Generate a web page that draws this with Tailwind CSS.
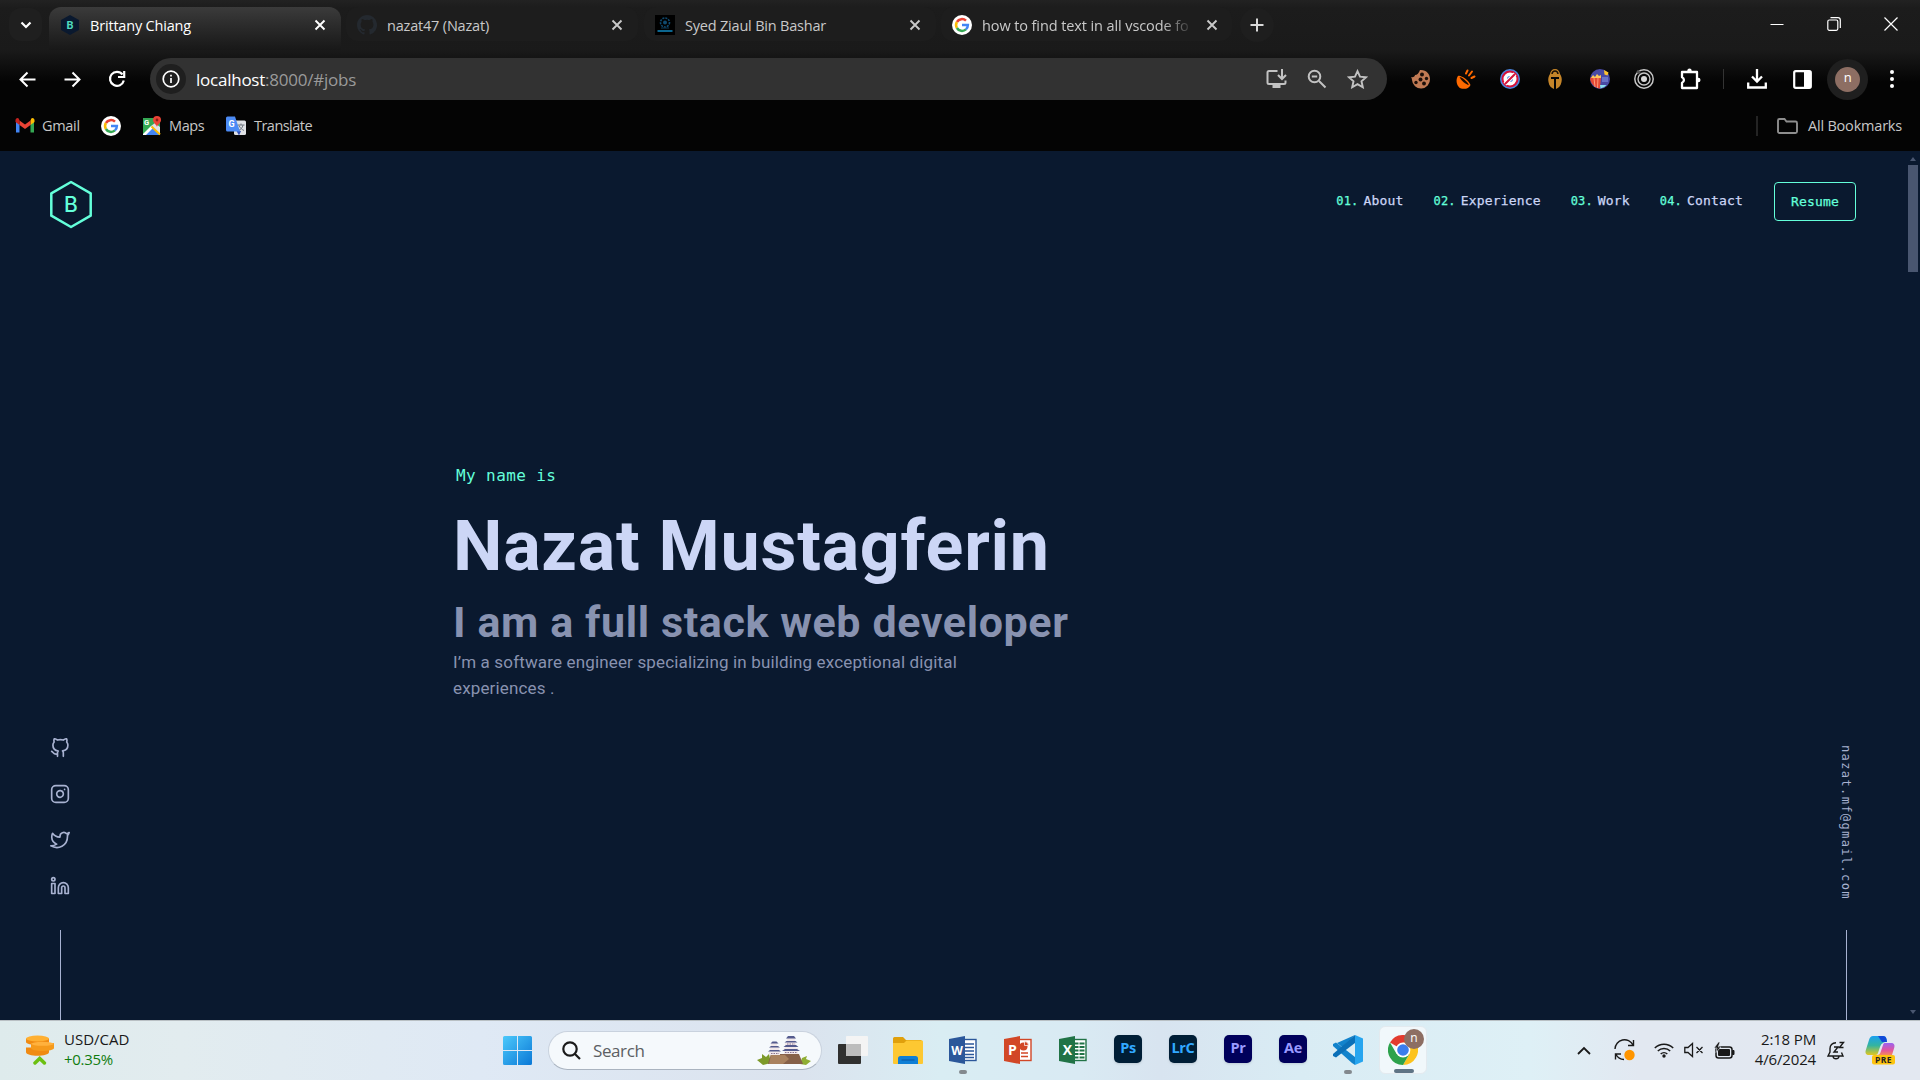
<!DOCTYPE html>
<html lang="en">
<head>
<meta charset="utf-8">
<title>Brittany Chiang</title>
<script src="https://cdn.jsdelivr.net/npm/@tailwindcss/browser@4"></script>
</head>
<body class="w-[1920px] h-[1080px] overflow-hidden bg-black font-['Open_Sans',sans-serif]">
<svg class="hidden">
  <defs>
    <symbol id="g-logo" viewBox="0 0 20 20">
      <circle cx="10" cy="10" r="10" fill="#fff"/>
      <path d="M4.9 7A5.9 5.9 0 0 1 14 5.700" fill="none" stroke="#ea4335" stroke-width="2.500"/>
      <path d="M4.900 13A5.900 5.900 0 0 1 4.900 7" fill="none" stroke="#fbbc05" stroke-width="2.500"/>
      <path d="M13.900 14.400A5.900 5.900 0 0 1 4.900 13" fill="none" stroke="#34a853" stroke-width="2.500"/>
      <path d="M10 10H15.900A5.900 5.900 0 0 1 13.900 14.400" fill="none" stroke="#4285f4" stroke-width="2.500"/>
    </symbol>
    <symbol id="x" viewBox="0 0 12 12"><path d="M1.500 1.500l9 9M10.500 1.500l-9 9" stroke="currentColor" stroke-width="1.900"/></symbol>
  </defs>
</svg>

<!-- Browser frame -->
<header class="h-[151px] bg-[linear-gradient(#222_0,#1c1c1c_8px,#1a1a1a_50px,#040404_82px,#040404_100%)] text-[14.5px]">
  <div class="flex h-[50px] items-start">
    <div class="w-[49px] pl-[9px] pt-2">
      <div class="flex size-[33px] items-center justify-center rounded-xl bg-[#1f1f1f]">
        <svg width="12" height="8" viewBox="0 0 12 8"><path d="M1.500 1.500L6 6l4.500-4.500" fill="none" stroke="#fff" stroke-width="2.200"/></svg>
      </div>
    </div>
    <div class="mr-[5px] mt-[7px] flex h-[43px] w-[292px] items-start rounded-t-xl bg-linear-to-b from-[#3b3b3b] to-[#181818] pl-[11px] pt-2 text-white">
      <svg class="mr-2.5" width="20" height="20" viewBox="0 0 20 20"><path d="M10 0l9 5v10l-9 5-9-5V5z" fill="#0a192f"/><text x="10" y="14" font-size="11" font-weight="700" text-anchor="middle" fill="#4fd9bd" font-family="Roboto">B</text></svg>
      <span class="w-[224px] leading-[22px] tracking-[-0.185px]">Brittany Chiang</span>
      <svg class="mt-1" width="12" height="12"><use href="#x"/></svg>
    </div>
    <div class="mr-1.5 mt-[7px] flex h-[34px] w-[292px] items-start rounded-xl bg-[#1d1d1d] pl-[11px] pt-2 text-[#c9c9c9]">
      <svg class="mr-2.5" width="20" height="20" viewBox="0 0 16 16"><path fill="#24292f" d="M8 0C3.580 0 0 3.580 0 8c0 3.540 2.290 6.530 5.470 7.590.4.070.55-.17.55-.38 0-.19-.01-.82-.01-1.490-2.010.37-2.530-.49-2.690-.94-.09-.23-.48-.94-.82-1.130-.28-.15-.68-.52-.01-.53.630-.01 1.080.58 1.230.82.720 1.210 1.870.87 2.330.66.070-.52.280-.87.510-1.070-1.780-.2-3.640-.89-3.640-3.950 0-.87.310-1.590.82-2.150-.08-.2-.36-1.020.08-2.120 0 0 .67-.21 2.200.82a7.600 7.600 0 0 1 4 0c1.530-1.040 2.200-.82 2.200-.82.440 1.100.16 1.920.08 2.120.51.560.82 1.270.82 2.150 0 3.070-1.870 3.750-3.650 3.950.29.250.54.730.54 1.480 0 1.070-.01 1.930-.01 2.200 0 .21.150.46.550.38A8 8 0 0 0 8 0z"/></svg>
      <span class="w-[224px] leading-[22px] tracking-[-0.19px]">nazat47 (Nazat)</span>
      <svg class="mt-1" width="12" height="12"><use href="#x"/></svg>
    </div>
    <div class="mr-[5px] mt-[7px] flex h-[34px] w-[292px] items-start rounded-xl bg-[#1d1d1d] pl-[11px] pt-2 text-[#c9c9c9]">
      <svg class="mr-2.5" width="20" height="20" viewBox="0 0 20 20"><path fill="#000" d="M0 0h20v20H0z"/><circle cx="10" cy="7.500" r="4.500" fill="none" stroke="#0f4a70" stroke-width="1.600" stroke-dasharray="2 1"/><circle cx="10" cy="7.500" r="2" fill="#0f4a70"/><path d="M6 13h8" stroke="#0d3a58"/><path d="M2.500 16h15" stroke="#1081b4" stroke-width="1.600"/></svg>
      <span class="w-[224px] leading-[22px] tracking-[-0.2px]">Syed Ziaul Bin Bashar</span>
      <svg class="mt-1" width="12" height="12"><use href="#x"/></svg>
    </div>
    <div class="mt-[7px] flex h-[34px] w-[291px] items-start rounded-xl bg-[#1d1d1d] pl-[11px] pt-2 text-[#c9c9c9]">
      <svg class="mr-2.5" width="20" height="20"><use href="#g-logo"/></svg>
      <span class="mr-[15px] w-[209px] whitespace-nowrap leading-[22px] tracking-[-0.1px] [mask-image:linear-gradient(to_right,#000_180px,transparent_212px)]">how to find text in all vscode fo</span>
      <svg class="mt-1" width="12" height="12"><use href="#x"/></svg>
    </div>
    <div class="ml-2 mt-2 flex size-[34px] items-center justify-center rounded-full bg-[#1e1e1e]">
      <svg width="14" height="14" viewBox="0 0 14 14"><path d="M7 .5v13M.5 7h13" stroke="#d8d8d8" stroke-width="2"/></svg>
    </div>
    <div class="ml-auto mr-[22px] mt-[17px] flex items-center gap-[43px]">
      <svg width="14" height="14"><path d="M.5 7.500h13" stroke="#fff"/></svg>
      <svg width="14" height="14" viewBox="0 0 14 14" fill="none" stroke="#fff" stroke-width="1.200"><rect x=".8" y="3" width="10" height="10.300" rx="1.500"/><path d="M3.500.7H11a2.300 2.300 0 0 1 2.300 2.300v8"/></svg>
      <svg width="14" height="14"><path d="M.5.5l13 13M13.500.5l-13 13" stroke="#fff" stroke-width="1.200"/></svg>
    </div>
  </div>

  <div class="flex h-[50px] items-center pt-2">
    <svg class="ml-[19px]" width="17" height="17" viewBox="0 0 17 17" fill="none" stroke="#fff" stroke-width="2"><path d="M16.500 8.500H2M8.500 1.500l-7 7 7 7"/></svg>
    <svg class="ml-7" width="17" height="17" viewBox="0 0 17 17" fill="none" stroke="#fff" stroke-width="2"><path d="M.5 8.500H15M8.500 1.500l7 7-7 7"/></svg>
    <svg class="ml-[27px]" width="18" height="18" viewBox="0 0 18 18" fill="none" stroke="#fff" stroke-width="2.200"><path d="M15.800 10.500A7 7 0 1 1 14.500 4.500"/><path d="M16.200 1v6H10"/></svg>
    <div class="ml-6 flex h-[42px] w-[1237px] items-center rounded-full bg-[#323232] pl-1.5">
      <div class="flex size-[30px] items-center justify-center rounded-full bg-[#1f1f1f]">
        <svg width="18" height="18" viewBox="0 0 18 18" fill="none" stroke="#fff" stroke-width="1.700"><circle cx="9" cy="9" r="7.800"/><path d="M9 8v5M9 4.800v1.800"/></svg>
      </div>
      <span class="ml-2.5 pt-px text-[17px] tracking-[-0.24px] text-[#9a9a9a]"><span class="text-white">localhost</span>:8000/#jobs</span>
      <div class="ml-auto mr-[19px] flex items-center gap-5 text-[#c2c2c2]">
        <svg width="21" height="20" viewBox="0 0 21 20" fill="none" stroke="currentColor" stroke-width="2"><path d="M11.500 2H3a1.500 1.500 0 0 0-1.500 1.500v10A1.500 1.500 0 0 0 3 15h15a1.500 1.500 0 0 0 1.500-1.500V11.500"/><path d="M6.500 17.500h8" stroke-width="3"/><path d="M16 0v9.500M12 6l4 4 4-4"/></svg>
        <svg width="20" height="20" viewBox="0 0 20 20" fill="none" stroke="currentColor" stroke-width="2"><circle cx="7.500" cy="7.500" r="5.800"/><path d="M12 12l6.500 6.500M4.800 7.500h5.400"/></svg>
        <svg width="21" height="20" viewBox="0 0 21 20" fill="none" stroke="currentColor" stroke-width="1.900"><path d="M10.500 2.200l2.500 5.500 6 .6-4.500 4 1.300 5.900-5.300-3.100-5.300 3.100 1.300-5.900-4.500-4 6-.6z"/></svg>
      </div>
    </div>
    <div class="ml-6 flex items-center gap-[24.700px]">
      <svg width="20" height="20" viewBox="0 0 20 20"><path d="M9 1a3 3 0 0 0 1 0c5.500 0 9 4 9 9a9 9 0 0 1-18 1c0-1-.3-2-1-3 2 1 4-.5 4-2 2 0 4-2 5-5z" fill="#c07a54"/><g fill="#1c0f0a"><circle cx="11" cy="5.500" r="2"/><circle cx="15.500" cy="9.500" r="1.700"/><circle cx="9.500" cy="10.500" r="2"/><circle cx="5" cy="13.500" r="1.700"/><circle cx="13" cy="14.500" r="1.900"/></g></svg>
      <svg width="20" height="20" viewBox="0 0 20 20"><path d="M2 7c2.500-1.500 11 4.500 12.500 9C13 19.500 9 20.500 5 19.500 1 18-1 11 2 7z" fill="#ff6a00"/><path d="M3.500 8C6 8 12 13 12.800 16 10 15.500 5 11.500 3.500 8z" fill="#1a0c02"/><g stroke="#ff6a00" stroke-width="2" stroke-linecap="round"><path d="M10 4.500l1.500-3M13 6.500l3-4M15.500 9l3-1.500"/></g></svg>
      <svg width="20" height="20" viewBox="0 0 20 20"><circle cx="10" cy="10" r="10" fill="#4a86e0"/><circle cx="10" cy="10" r="7.500" fill="#fff" stroke="#d5123a" stroke-width="2"/><circle cx="10" cy="10" r="3" fill="#4a86e0"/><path d="M5 15L15 5" stroke="#fff" stroke-width="4"/><path d="M5 15L15 5" stroke="#d5123a" stroke-width="2"/></svg>
      <svg width="20" height="20" viewBox="0 0 20 20"><path d="M10 0c3 0 4.500 2 5 5 1.500 2 2.300 5 1.500 8-.8 4-3 6-5.500 7V10h3V8H6v2h3v10c-2.500-1-5-3-5.500-7-.7-3 0-6 1.500-8 .5-3 2-5 5-5z" fill="#c58529"/><path d="M7 5c.3-2 1.300-3 3-3s2.700 1 3 3" fill="none" stroke="#1c1206" stroke-width="1.500"/></svg>
      <svg width="20" height="20" viewBox="0 0 20 20"><circle cx="10" cy="10" r="10" fill="#494aa5"/><path d="M12 8h6v5h-6z" fill="#6a74c8"/><path d="M14 1l4.500 2.500-1 3-3-1z" fill="#ffc42e"/><path d="M1 8h10l-1 11.500C5 19 1 15 0 10z" fill="#e64a35"/><path d="M1 9l2-3 2 2 2-3 2 2 2-1v3H1z" fill="#ffc65b"/><path d="M4 9l1 9M8 9l-.5 10" stroke="#ff9a7a"/><path d="M10 16h6.500a9 9 0 0 1-6 3.500z" fill="#8ce0ee"/></svg>
      <svg width="20" height="20" viewBox="0 0 20 20" fill="none" stroke="#c6c6c6"><circle cx="10" cy="10" r="9.200" stroke-width="1.500"/><circle cx="10" cy="10" r="6" stroke-width="1.400"/><circle cx="10" cy="10" r="3" fill="#d8d8d8" stroke="none"/><path d="M3 2l3 2" stroke="#555" stroke-width="3"/></svg>
      <svg width="22" height="22" viewBox="0 0 22 22"><path d="M3 4H18V20H3v-5.200a3 3 0 0 0 0-5.600z" fill="none" stroke="#fff" stroke-width="2.300" stroke-linejoin="round"/><circle cx="10.500" cy="2.800" r="2.200" fill="#fff"/><circle cx="19.300" cy="12" r="2.200" fill="#fff"/></svg>
    </div>
    <div class="ml-[22px] h-5 w-px bg-[#333]"></div>
    <svg class="ml-[23px]" width="20" height="20" viewBox="0 0 20 20" fill="none" stroke="#fff" stroke-width="2.300"><path d="M10 0v12M5 7.500l5 5 5-5M1.200 13.500v5h17.600v-5"/></svg>
    <svg class="ml-[26px]" width="19" height="19" viewBox="0 0 19 19"><rect x="1.200" y="1.200" width="16.600" height="16.600" rx="1.500" fill="none" stroke="#fff" stroke-width="2.200"/><path d="M11 1h7v17h-7z" fill="#fff"/></svg>
    <div class="ml-[15px] flex size-[41px] items-center justify-center rounded-full bg-[#1f1f1f]"><div class="flex size-[25px] items-center justify-center rounded-full bg-[#8d6e63] pb-0.5 text-[13px] text-white">n</div></div>
    <svg class="ml-[22px]" width="4" height="18" viewBox="0 0 4 18" fill="#fff"><circle cx="2" cy="2" r="2"/><circle cx="2" cy="9" r="2"/><circle cx="2" cy="16" r="2"/></svg>
  </div>

  <div class="flex h-[51px] items-center pl-[15px] pr-[18px] text-[#c7c7c7]">
    <svg width="20" height="15" viewBox="0 0 20 15"><path d="M1 2v12.500h3.500V6z" fill="#4285f4"/><path d="M19 2v12.500h-3.500V6z" fill="#34a853"/><path d="M15.500 2.500V7L19.500 4V2a2 2 0 0 0-3.200-1.500z" fill="#fbbc04"/><path d="M4.500 7V2.500L10 6.500l5.500-4V7L10 11z" fill="#ea4335"/><path d="M.5 2v2l4 3V2.500L3.700.5A2 2 0 0 0 .5 2z" fill="#c5221f"/></svg>
    <span class="ml-[7px] w-[59px] tracking-[-0.3px]">Gmail</span>
    <svg class="mr-[21px]" width="20" height="20"><use href="#g-logo"/></svg>
    <svg width="20" height="20" viewBox="0 0 20 20"><path d="M1 2h17v17H1z" fill="#34a853"/><path d="M9 11l9 8H3z" fill="#4285f4"/><path d="M9 10L1 18v1h3l8-8z" fill="#fff"/><path d="M9 10l4-3 5 4v8z" fill="#dfe3e8"/><path d="M9.500 10.500l8.500 8" stroke="#fbbc04" stroke-width="2"/><text x="2" y="9" font-size="7.500" font-weight="700" fill="#fff" font-family="Roboto">G</text><path d="M15 11c-.5-2.500-4-4-4-7a4 4 0 0 1 8 0c0 3-3.500 4.500-4 7z" fill="#ea4335"/><circle cx="15" cy="4" r="1.400" fill="#8c2018"/></svg>
    <span class="ml-[7px] w-[57px] tracking-[-0.4px]">Maps</span>
    <svg width="20" height="20" viewBox="0 0 20 20"><rect x="8" y="4.500" width="12" height="14.500" rx="1.500" fill="#dfe1e5"/><path d="M10 14l3 5.500L15 15z" fill="#3350b5"/><path d="M11.500 9h7M15 7.500V9M17 9c-.5 3-2.500 4.500-4.500 5.500M13 9.500c1 2.500 3 4 5 5" stroke="#6f7780" fill="none"/><path d="M1.500.5H9l5 15H1.500A1.500 1.500 0 0 1 0 14V2A1.500 1.500 0 0 1 1.500.5z" fill="#4c8bf5"/><text x="2.500" y="11" font-size="9" font-weight="700" fill="#fff" font-family="Roboto">G</text></svg>
    <span class="ml-2 tracking-[-0.53px]">Translate</span>
    <div class="ml-auto h-5 w-0.5 bg-[#242424]"></div>
    <svg class="ml-[19px]" width="21" height="16" viewBox="0 0 21 16"><path d="M1 13.500v-11A1.500 1.500 0 0 1 2.500 1h5l2 2.500h9A1.500 1.500 0 0 1 20 5v8.500a1.500 1.500 0 0 1-1.500 1.500h-16A1.500 1.500 0 0 1 1 13.500z" fill="none" stroke="#8e8e8e" stroke-width="1.900"/></svg>
    <span class="ml-[10px] tracking-[-0.2px]">All Bookmarks</span>
  </div>
</header>

<!-- Portfolio page -->
<main class="relative flex h-[869px] bg-[#0a192f] font-['Roboto',sans-serif] text-[#a8b2d1]">
  <aside class="flex w-[121px] flex-col justify-between">
    <svg class="ml-[49px] mt-[28px]" width="44" height="50" viewBox="0 0 44 50"><path d="M22 3l19.700 11.300v22.400L22 48 2.300 36.700V14.300z" fill="none" stroke="#64ffda" stroke-width="2.500" stroke-linejoin="round"/><text x="22" y="33" font-size="21" text-anchor="middle" fill="#64ffda" font-family="Inter" font-weight="500">B</text></svg>
    <div class="flex w-[120px] flex-col items-center gap-[26px] [&_svg]:size-5 [&_svg]:fill-none [&_svg]:stroke-current [&_svg]:stroke-2 [&_svg]:[stroke-linecap:round] [&_svg]:[stroke-linejoin:round]">
      <svg viewBox="0 0 24 24"><path d="M9 19c-5 1.500-5-2.500-7-3m14 6v-3.870a3.370 3.370 0 0 0-.94-2.610c3.140-.35 6.440-1.540 6.440-7A5.440 5.440 0 0 0 20 4.770 5.070 5.070 0 0 0 19.910 1S18.730.650 16 2.480a13.380 13.380 0 0 0-7 0C6.270.650 5.090 1 5.090 1A5.070 5.070 0 0 0 5 4.770a5.440 5.440 0 0 0-1.500 3.780c0 5.420 3.300 6.610 6.440 7A3.370 3.370 0 0 0 9 18.130V22"/></svg>
      <svg viewBox="0 0 24 24"><rect x="2" y="2" width="20" height="20" rx="5"/><path d="M16 11.370A4 4 0 1 1 12.630 8 4 4 0 0 1 16 11.370zM17.500 6.500h.01"/></svg>
      <svg viewBox="0 0 24 24"><path d="M23 3a10.900 10.900 0 0 1-3.140 1.530 4.480 4.480 0 0 0-7.860 3v1A10.660 10.660 0 0 1 3 4s-4 9 5 13a11.640 11.640 0 0 1-7 2c9 5 20 0 20-11.500a4.500 4.500 0 0 0-.08-.83A7.720 7.720 0 0 0 23 3z"/></svg>
      <svg viewBox="0 0 24 24"><path d="M16 8a6 6 0 0 1 6 6v7h-4v-7a2 2 0 0 0-4 0v7h-4v-7a6 6 0 0 1 6-6z"/><rect x="2" y="9" width="4" height="12"/><circle cx="4" cy="4" r="2"/></svg>
      <div class="ml-px mt-[8px] h-[90px] w-px bg-[#a8b2d1]"></div>
    </div>
  </aside>

  <section class="ml-[332px] w-[760px] pt-[313px]">
    <p class="h-[44px] pl-[3px] font-['DejaVu_Sans_Mono',monospace] text-[16px] leading-6 tracking-[0.4px] text-[#64ffda]">My name is</p>
    <h1 class="text-[70px] font-bold leading-[76px] tracking-[0.75px] text-[#ccd6f6]">Nazat Mustagferin</h1>
    <h2 class="mt-3 text-[43px] font-bold leading-[52px] tracking-[0.6px] text-[#8892b0]">I am a full stack web developer</h2>
    <p class="w-[540px] pt-px text-[17px] leading-[26px] tracking-[0.153px] text-[#8892b0]">I’m a software engineer specializing in building exceptional digital experiences .</p>
  </section>

  <aside class="absolute right-0 top-0 flex h-full flex-col items-end justify-between pr-[64px] font-['DejaVu_Sans_Mono',monospace] text-[13px]">
    <nav class="flex items-start pt-[31px] tracking-[0.17px] text-[#ccd6f6] [-webkit-text-stroke:0.25px_currentColor]">
      <a class="mr-[30px] mt-[9px]"><span class="mr-[5px] text-xs text-[#64ffda]">01.</span>About</a>
      <a class="mr-[30px] mt-[9px]"><span class="mr-[5px] text-xs text-[#64ffda]">02.</span>Experience</a>
      <a class="mr-[30px] mt-[9px]"><span class="mr-[5px] text-xs text-[#64ffda]">03.</span>Work</a>
      <a class="mr-[31px] mt-[9px]"><span class="mr-[5px] text-xs text-[#64ffda]">04.</span>Contact</a>
      <a class="flex h-[39px] w-[82px] items-center justify-center rounded-[4px] border border-[#64ffda] text-[#64ffda]">Resume</a>
    </nav>
    <div class="mr-px flex w-[20px] flex-col items-center">
      <span class="ml-px h-[185px] text-[12px] leading-5 tracking-[1.38px] [writing-mode:vertical-rl]">nazat.mf@gmail.com</span>
      <div class="ml-[3px] h-[90px] w-px bg-[#a8b2d1]"></div>
    </div>
  </aside>

  <div class="absolute right-0 top-0 flex h-full w-[14px] flex-col items-center pt-1.5">
    <svg width="6" height="4"><path d="M0 4l3-4 3 4z" fill="#495670"/></svg>
    <div class="mt-1 h-[107px] w-2.5 bg-[#495670]"></div>
    <svg class="mb-1.5 mt-auto" width="6" height="4"><path d="M0 0l3 4 3-4z" fill="#495670"/></svg>
  </div>
</main>

<!-- Taskbar -->
<footer class="flex h-[60px] items-center border-t border-[#b9c0c4] bg-[linear-gradient(to_right,#deebec_0,#e2ecef_180px,#dfe9f5_480px,#dbe3ee_800px,#d9edf3_940px,#d9eaf3_1080px,#d8e4f0_1160px,#d9ecf4_1300px,#def0f6_1530px,#e2e8f1_1640px,#e3e8f1_100%)] pb-px text-[15px] text-[#191919]">
  <svg class="ml-[25px]" width="30" height="30" viewBox="0 0 30 30"><g fill="#f08a12"><path d="M1 12.500h23V17c0 5-23 5-23 0z"/><path d="M6 8h23v5c0 4-23 4-23 0z" fill="#f59a1c"/><path d="M1 3.500h23V7c0 4-23 4-23 0z"/></g><ellipse cx="17.500" cy="8.800" rx="11.500" ry="2" fill="#ffb13d"/><ellipse cx="12.500" cy="3.500" rx="11.500" ry="3" fill="#ffb032"/><path d="M10 28l4.700-4.500 4.700 4.500" fill="none" stroke="#6bc011" stroke-width="3.500" stroke-linecap="round"/></svg>
  <div class="ml-[9px] w-[439px] pb-[3px] text-[15px] leading-5"><div>USD/CAD</div><div class="tracking-[-0.3px] text-[#107c10]">+0.35%</div></div>

  <svg width="29" height="29" viewBox="0 0 29 29"><defs><linearGradient id="w" x1="0" y1="0" x2="1" y2="1" gradientUnits="objectBoundingBox"><stop stop-color="#4cc9fb"/><stop offset="1" stop-color="#0b78d6"/></linearGradient></defs><path fill="url(#w)" d="M1.500 0H14v14H0V1.500A1.500 1.500 0 0 1 1.500 0zM15 0h12.500A1.500 1.500 0 0 1 29 1.500V14H15zM0 15h14v14H1.500A1.500 1.500 0 0 1 0 27.500zM15 15h14v12.500a1.500 1.500 0 0 1-1.500 1.500H15z"/></svg>
  <div class="ml-4 flex h-[39px] w-[274px] items-center rounded-full border border-[#c9d2de] border-b-[#aab4c0] bg-[#f5f9fc] pl-[13px] pr-2.5">
    <svg width="19" height="19" viewBox="0 0 19 19" fill="none" stroke="#1b1b1b" stroke-width="2.200"><circle cx="8" cy="8" r="6.700"/><path d="M12.700 12.700l5.300 5.300"/></svg>
    <span class="ml-[12px] pt-px text-[17px] tracking-[-0.4px] text-[#5c5f63]">Search</span>
    <svg class="ml-auto" width="54" height="30" viewBox="0 0 54 30">
      <path d="M0 25l5-2 0-4 4 3 3-3 2 9-8 2z" fill="#7d9a2a"/><path d="M54 26l-5-2 1-3-5 2-2 6 6 1z" fill="#8fae33"/>
      <path d="M14 19h28l4 10H11z" fill="#866149"/><path d="M14 20h14l4 4-6 5H12z" fill="#a9825f"/>
      <path d="M14 8h6v4h2v4h1v4H12v-4h1v-4h1zM30 3h8v5h1v5h2v6H27v-6h1V8h2z" fill="#f1e8ea"/>
      <path d="M13.500 8.500l2-2h4l2 2zM12 12.500l2-1.500h7l2 1.500zM11 16.500l2-1.500h9l2 1.500zM29 3.500L31 1h6l2 2.500zM27.500 7.500l2-1.500h9l2 1.500zM26.500 12l2.500-2h10l2.500 2zM25 16l3-2h12l3 2z" fill="#545b8e"/>
      <path d="M14 18.500h8M30 9h8M28 17.500h12" stroke="#8a7490" stroke-dasharray="1.500 1"/>
    </svg>
  </div>
  <svg class="ml-4" width="30" height="28" viewBox="0 0 30 28"><rect y="8" width="23" height="20" rx="1" fill="#30302f"/><rect x="8" y="0" width="22" height="20" rx="1" fill="#f4f4f4"/><path d="M8 8h15v12H8z" fill="#bdbdbd"/></svg>
  <svg class="ml-[25px]" width="30" height="27" viewBox="0 0 30 27"><path d="M0 1.500A1.500 1.500 0 0 1 1.500 0H10l3 3h15.500v5H0z" fill="#e0a00c"/><path d="M0 6h11l2.500-2.500H29a1 1 0 0 1 1 1V26a1 1 0 0 1-1 1H1a1 1 0 0 1-1-1z" fill="#fdc832"/><path d="M5 27v-5.500a2.500 2.500 0 0 1 2.500-2.500h15a2.500 2.500 0 0 1 2.500 2.500V27z" fill="#0f7fd6"/><path d="M8.500 23h13" stroke="#0a559f"/></svg>

  <div class="relative ml-[26px] flex h-[60px] w-[28px] items-center">
    <svg width="28" height="28" viewBox="0 0 28 28"><rect x="13" y="3.500" width="14" height="21" fill="#fff" stroke="#2b579a" stroke-width="1.400"/><path d="M16 8h9M16 11.500h9M16 15h9M16 18.500h9M16 21.500h9" stroke="#2b579a" stroke-width="1.500"/><path d="M0 3l16-3v28L0 25z" fill="#2b579a"/><text x="8" y="18.500" text-anchor="middle" font-size="12" font-weight="700" fill="#fff" font-family="Open Sans">W</text></svg>
    <div class="absolute bottom-[6px] left-[10px] h-1 w-2 rounded-full bg-[#83898e]"></div>
  </div>
  <svg class="ml-[27px]" width="28" height="28" viewBox="0 0 28 28"><rect x="13" y="3.500" width="14" height="21" fill="#fff" stroke="#d24726" stroke-width="1.400"/><path d="M17 17h7M17 20.500h7" stroke="#d24726" stroke-width="1.600"/><circle cx="19.500" cy="10.500" r="4" fill="#d24726"/><path d="M20.500 9.500V5.500a4 4 0 0 1 4 4z" fill="#d24726" stroke="#fff" stroke-width=".7"/><path d="M0 3l16-3v28L0 25z" fill="#d24726"/><text x="8.500" y="19" text-anchor="middle" font-size="14" font-weight="700" fill="#fff" font-family="Open Sans">P</text></svg>
  <svg class="ml-[27px]" width="28" height="28" viewBox="0 0 28 28"><rect x="13" y="3.500" width="14" height="21" fill="#fff" stroke="#217346" stroke-width="1.400"/><path d="M20.500 7.500h5M20.500 11h5M20.500 14.500h5M20.500 18h5M20.500 21.500h5M15 7.500h4.500M15 11h4.500M15 14.500h4.500M15 18h4.500M15 21.500h4.500" stroke="#217346" stroke-width="2"/><path d="M0 3l16-3v28L0 25z" fill="#217346"/><text x="8.500" y="19" text-anchor="middle" font-size="14" font-weight="700" fill="#fff" font-family="Open Sans">X</text></svg>
  <div class="mb-[3px] ml-[27px] flex gap-[27px] text-center text-[14.5px] font-bold leading-[26px] tracking-[-0.3px]">
    <div class="h-7 w-7 rounded-[5px] bg-[#001e36] text-[#31a8ff] shadow-sm">Ps</div>
    <div class="h-7 w-7 rounded-[5px] bg-[#001e36] text-[#31a8ff] shadow-sm">LrC</div>
    <div class="h-7 w-7 rounded-[5px] bg-[#00005b] text-[#9999ff] shadow-sm">Pr</div>
    <div class="h-7 w-7 rounded-[5px] bg-[#00005b] text-[#9999ff] shadow-sm">Ae</div>
  </div>
  <div class="relative ml-[26px] flex h-[60px] w-[30px] items-center">
    <svg width="30" height="30" viewBox="0 0 30 30"><path d="M22 0L9 12.200 3 7.500 0 9v2l19 17 3 2V22L4 8z" fill="#1283cc"/><path d="M0 19l22-19v8L3 22.500 0 21z" fill="#0b70b8"/><path d="M22 0l8 3.500v23L22 30z" fill="#27a5ef"/></svg>
    <div class="absolute bottom-[6px] left-[11px] h-1 w-2 rounded-full bg-[#83898e]"></div>
  </div>
  <div class="relative ml-4 flex size-12 items-center justify-center rounded-md border border-[#e3eaef] bg-[#f1f8fb]">
    <svg width="30" height="30" viewBox="-15 -15 30 30"><path d="M0 0L-13-7.500A15 15 0 0 1 13-7.500z" fill="#e33b2e"/><path d="M0-7.500H13A15 15 0 0 1 0 15L6.500 3.700z" fill="#fcc31e"/><path d="M-6.500 3.700L-13-7.500A15 15 0 0 0 0 15L6.500 3.700z" fill="#2da24c"/><circle r="7.400" fill="#fff"/><circle r="5.800" fill="#3b7ded"/></svg>
    <div class="absolute right-[2px] top-[2px] flex size-5 items-center justify-center rounded-full bg-[#8d6e63] pb-0.5 text-xs text-white">n</div>
    <div class="absolute bottom-0 left-[14px] h-1 w-5 rounded-full bg-[#5f7485]"></div>
  </div>

  <svg class="ml-auto" width="14" height="9" viewBox="0 0 14 9"><path d="M1 8l6-6 6 6" fill="none" stroke="#191919" stroke-width="1.800"/></svg>
  <svg class="ml-[23px]" width="22" height="22" viewBox="0 0 22 22" fill="none" stroke="#191919" stroke-width="1.400"><path d="M1 10A9.500 9.500 0 0 1 19 6M19.500 1v5.500H14M10 20.500A9.500 9.500 0 0 1 2 15.500M1.500 20.500V15H7"/><circle cx="15.500" cy="16" r="5.200" fill="#ff9500" stroke="none"/></svg>
  <svg class="ml-[18px]" width="20" height="16" viewBox="0 0 20 16" fill="none" stroke="#191919" stroke-width="1.500"><path d="M.8 6a13 13 0 0 1 18.400 0M3.800 9a8.800 8.800 0 0 1 12.400 0M6.700 12a4.800 4.800 0 0 1 6.600 0"/><circle cx="10" cy="14" r="1.700" fill="#191919" stroke="none"/></svg>
  <svg class="ml-[10px]" width="20" height="16" viewBox="0 0 20 16" fill="none" stroke="#191919" stroke-width="1.300"><path d="M.8 5.500v5H4l4.500 4V1.500L4 5.500zM12.500 5l6 6M18.500 5l-6 6"/></svg>
  <svg class="ml-[10px]" width="21" height="17" viewBox="0 0 21 17"><rect x="2" y="5" width="16" height="11" rx="2.500" fill="none" stroke="#191919" stroke-width="1.500"/><rect x="4" y="7" width="12" height="7" rx="1" fill="#191919"/><path d="M18.500 8.500h1.500v4h-1.500z" fill="#191919" stroke="#191919"/><path d="M4.500 0L0 6h3l-1 4.500L7 5H4.200L6 0z" fill="#191919" stroke="#e2e8f1" stroke-width=".6"/></svg>
  <div class="ml-4 w-[65px] whitespace-nowrap pb-[3px] text-right leading-5 tracking-[-0.15px]"><div>2:18 PM</div><div>4/6/2024</div></div>
  <svg class="ml-[11px]" width="18" height="19" viewBox="0 0 18 19" fill="none" stroke="#191919" stroke-width="1.400"><path d="M9 1.700C5 1.700 3 4.500 3 7.500V11l-2 4h15l-1.500-3.500M6 15.500c.5 3 5.500 3 6 0M7 6h4l-4 5h4M12.500 1.500h4l-4 5h4"/></svg>
  <svg class="ml-5 mr-[25px]" width="30" height="30" viewBox="0 0 30 30"><defs><linearGradient id="c1" x1="0" y1="0" x2="0" y2="1"><stop stop-color="#1aa0f0"/><stop offset=".5" stop-color="#34b4a0"/><stop offset="1" stop-color="#e3c71e"/></linearGradient><linearGradient id="c2" x1="0" y1="0" x2="0" y2="1"><stop stop-color="#9a63f0"/><stop offset=".6" stop-color="#e2559f"/><stop offset="1" stop-color="#f58a5b"/></linearGradient></defs><path d="M8 1h10c2 0 3 1 3.500 3L22 7c-4 0-6 2-7 5l-2 6c-.6 2-2 2-4 2H4c-3 0-4-2-3.300-4.500L4 5c1-3 2-4 4-4z" fill="url(#c1)"/><path d="M13 1h5c2 0 3 1 3.500 3L22 7h-5z" fill="#1149d8"/><path d="M20 8h6c3 0 4 2 3.300 4.500L27 20H12c2 0 3-1 4-4l2-6c.4-1.500 1-2 2-2z" fill="url(#c2)"/><rect x="7" y="20" width="23" height="9.500" rx="2" fill="#fdc40f"/><text x="18.500" y="27.800" text-anchor="middle" font-size="8.500" font-weight="700" fill="#222" font-family="Open Sans" letter-spacing=".4">PRE</text></svg>
</footer>
</body>
</html>
